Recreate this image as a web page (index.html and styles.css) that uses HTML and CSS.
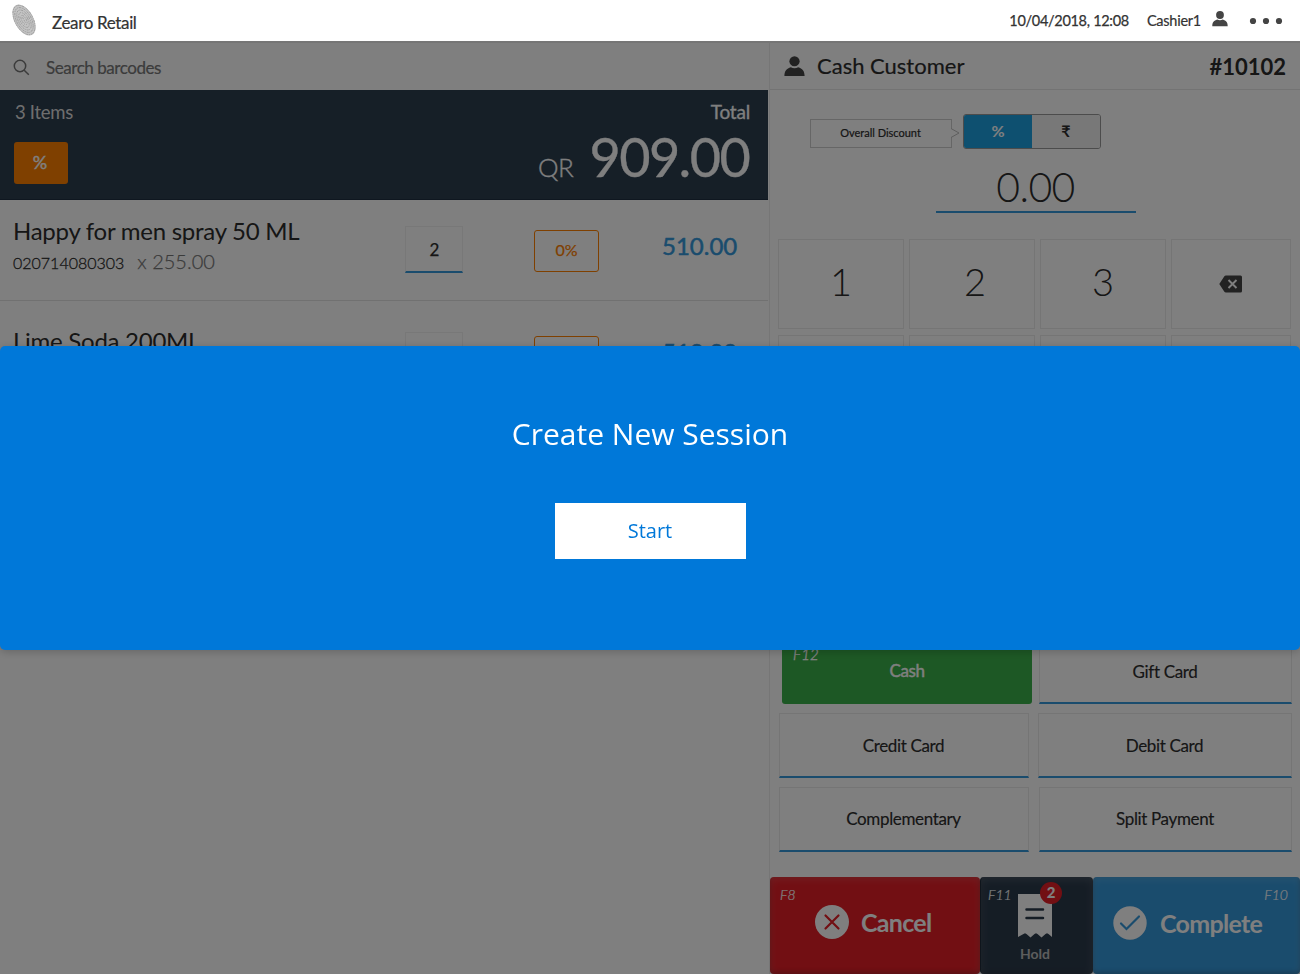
FILE: index.html
```html
<!DOCTYPE html>
<html lang="en">
<head>
<meta charset="utf-8">
<title>Zearo Retail</title>
<link rel="stylesheet" href="styles.css">
</head>
<body>
<header class="topbar">
  <svg class="logo" width="26" height="34" viewBox="0 0 26 34" fill="none">
    <g transform="rotate(-29 13 17)">
      <ellipse cx="13" cy="17" rx="9.4" ry="17" fill="#c4c4c4"/>
      <g stroke="#969696" stroke-width=".8" stroke-dasharray="2 .9 1.1 .7">
        <ellipse cx="13" cy="17" rx="9" ry="16"/>
        <ellipse cx="13" cy="17" rx="7.3" ry="13.6"/>
        <ellipse cx="13" cy="17" rx="5.6" ry="11"/>
        <ellipse cx="13" cy="17" rx="3.9" ry="8.2"/>
        <ellipse cx="13" cy="17" rx="2.2" ry="5.2"/>
        <path d="M13 14v6"/>
      </g>
    </g>
  </svg>
  <span class="brand">Zearo Retail</span>
  <span class="clock">10/04/2018, 12:08</span>
  <span class="cashier">Cashier1</span>
  <svg class="user" width="16" height="16" viewBox="0 0 16 16" fill="#444"><circle cx="8" cy="4" r="3.9"/><path d="M.3 15.2c0-4 1.700-5.700 4.900-6.700 1.700 1.100 3.900 1.100 5.600 0 3.200 1 4.900 2.700 4.900 6.700z"/></svg>
  <svg class="dots" width="34" height="8" viewBox="0 0 34 8" fill="#444"><circle cx="4" cy="4" r="3.100"/><circle cx="17" cy="4" r="3.100"/><circle cx="30" cy="4" r="3.100"/></svg>
</header>

<main class="pos">
  <section class="cart">
    <div class="search">
      <svg width="17" height="17" viewBox="0 0 17 17" fill="none" stroke="#777" stroke-width="1.500"><circle cx="7" cy="7" r="5.700"/><path d="M11.200 11.200l4.600 4.600"/></svg>
      <span>Search barcodes</span>
    </div>
    <div class="summary">
      <div class="summary-left">
        <span class="count">3 Items</span>
        <span class="percent">%</span>
      </div>
      <div class="summary-right">
        <span class="total-label">Total</span>
        <div class="total"><span class="currency">QR</span><span class="amount">909.00</span></div>
      </div>
    </div>
    <div class="item">
      <div class="info">
        <div class="name">Happy for men spray 50 ML</div>
        <div class="meta"><span class="code">020714080303</span><span class="price">x 255.00</span></div>
      </div>
      <div class="qty">2</div>
      <div class="disc">0%</div>
      <div class="line-total">510.00</div>
    </div>
    <div class="item second">
      <div class="info"><div class="name">Lime Soda 200ML</div></div>
      <div class="qty"></div>
      <div class="disc"></div>
      <div class="line-total">510.00</div>
    </div>
  </section>

  <section class="checkout">
    <div class="customer">
      <svg width="21" height="21" viewBox="0 0 16 16" fill="#444"><circle cx="8" cy="4" r="3.900"/><path d="M.3 15.200c0-4 1.700-5.700 4.900-6.700 1.700 1.100 3.900 1.100 5.600 0 3.200 1 4.900 2.700 4.900 6.700z"/></svg>
      <span class="customer-name">Cash Customer</span>
      <span class="order">#10102</span>
    </div>
    <div class="discount">
      <div class="tag">Overall Discount
        <svg class="arrow" width="9" height="11" viewBox="0 0 9 11"><path d="M0 .5L8 5 0 9.500" fill="#fff" stroke="#bbb"/></svg>
      </div>
      <div class="toggle"><span class="on">%</span><span class="off">₹</span></div>
    </div>
    <div class="entry">0.00</div>
    <div class="keys">
      <div class="key">1</div><div class="key k2">2</div><div class="key">3</div>
      <div class="key erase"><svg width="24" height="18" viewBox="0 0 24 18"><path d="M7 .5h14.500a1.500 1.500 0 0 1 1.500 1.500v14a1.500 1.500 0 0 1-1.500 1.500H7Q5.800 17.500 5.200 16.500L.3 9l4.900-7.500Q5.800.5 7 .5z" fill="#444"/><path d="M9.500 5l8 8m0-8l-8 8" stroke="#fff" stroke-width="1.900"/></svg></div>
      <div class="key"></div><div class="key"></div><div class="key"></div><div class="key"></div>
    </div>
    <div class="payments">
      <div class="pay-row first"><div class="cash"><i>F12</i>Cash</div><div class="pay">Gift Card</div></div>
      <div class="pay-row mid"><div class="pay">Credit Card</div><div class="pay">Debit Card</div></div>
      <div class="pay-row last"><div class="pay">Complementary</div><div class="pay">Split Payment</div></div>
    </div>
    <footer class="actions">
      <div class="action cancel">
        <i class="hot">F8</i>
        <svg width="34" height="34" viewBox="0 0 34 34"><circle cx="17" cy="17" r="17" fill="#fff"/><path d="M10.500 10.500l13 13m0-13l-13 13" stroke="#e41e26" stroke-width="2.200" stroke-linecap="round"/></svg>
        <span>Cancel</span>
      </div>
      <div class="action hold">
        <i class="hot">F11</i>
        <svg width="34" height="44" viewBox="0 0 34 44"><path d="M0 0h34v43l-3.500-3-1.500-.8-1.500.8-4 3.500-4-3.500-1.500-.8-1.500.8-4 3.500-4-3.500-1.500-.8-1.500.8L0 43z" fill="#fff"/><path d="M8.500 15.500h16.500M8.500 24h16.500" stroke="#2b3a4b" stroke-width="2.500" stroke-linecap="round"/></svg>
        <b class="badge">2</b>
        <span>Hold</span>
      </div>
      <div class="action complete">
        <i class="hot">F10</i>
        <svg width="34" height="34" viewBox="0 0 34 34"><circle cx="17" cy="17" r="16.700" fill="#fff"/><path d="M8 17.500l5.500 5.500L26 10.500" fill="none" stroke="#3498db" stroke-width="2.200" stroke-linecap="round"/></svg>
        <span>Complete</span>
      </div>
    </footer>
  </section>
</main>

<div class="overlay"></div>
<div class="dialog">
  <h1>Create New Session</h1>
  <button class="start">Start</button>
</div>
</body>
</html>
```
FILE: styles.css
```css
* { box-sizing: border-box; }
body {
  margin: 0;
  height: 974px;
  overflow: hidden;
  display: flex;
  flex-direction: column;
  font-family: Lato, sans-serif;
  color: #2c2c2c;
  background: #fff;
}
svg { display: block; flex: none; }
.topbar {
  height: 41px;
  flex: none;
  display: flex;
  align-items: center;
  padding: 0 17px 0 11px;
  color: #333;
}
.logo { margin-bottom: 1px; }
.brand { margin-left: 15px; font-size: 17px; letter-spacing: -.35px; padding-top: 3px; -webkit-text-stroke: .2px; }
.clock { margin-left: auto; font-size: 14.500px; letter-spacing: -.3px; -webkit-text-stroke: .25px; }
.cashier { margin-left: 18px; font-size: 14.500px; letter-spacing: -.25px; -webkit-text-stroke: .2px; }
.user { margin: 0 1px 4px 11px; }
.dots { margin-left: 20px; }

.pos { flex: 1; min-height: 0; display: flex; border-top: 2px solid #ececec; }
.cart { width: 770px; border-right: 1px solid #ececec; padding-right: 1px; }
.search {
  height: 47px;
  display: flex;
  align-items: center;
  gap: 16px;
  padding: 2px 13px 0;
  font-size: 17px;
  letter-spacing: -.45px;
  color: #777;
  -webkit-text-stroke: .2px;
}
.summary {
  height: 110px;
  display: flex;
  justify-content: space-between;
  background: #2d3e4f;
  border-bottom: 1px solid #1f2e40;
  color: #fff;
  padding: 10px 18px 0 14px;
}
.summary-left, .summary-right { display: flex; flex-direction: column; }
.count { font-size: 18.500px; letter-spacing: -.3px; line-height: 25px; padding-left: 1px; color: #ddd; }
.percent {
  width: 54px;
  height: 42px;
  margin-top: 17px;
  padding-right: 2px;
  border-radius: 3px;
  background: #ff8000;
  text-align: center;
  font-size: 18px;
  line-height: 41px;
  -webkit-text-stroke: .4px;
}
.summary-right { align-items: flex-end; }
.total-label { font-size: 19px; letter-spacing: -.2px; line-height: 22px; padding-top: 1px; -webkit-text-stroke: .3px; }
.total { display: flex; align-items: baseline; line-height: 64px; margin-top: 2px; }
.currency { font-size: 26px; font-weight: 300; letter-spacing: -.4px; margin-right: 16px; -webkit-text-stroke: .3px; }
.amount { font-size: 54px; letter-spacing: -1.600px; margin-right: .8px; -webkit-text-stroke: .3px; }
.item {
  height: 101px;
  display: flex;
  align-items: flex-start;
  border-bottom: 1px solid #e3e3e3;
  padding-left: 13px;
}
.info { width: 392px; padding-top: 16px; }
.name { font-size: 24px; letter-spacing: -.26px; line-height: 30px; white-space: nowrap; }
.meta { display: flex; align-items: baseline; line-height: 30px; }
.code { font-size: 16px; font-weight: 300; -webkit-text-stroke: .3px; }
.price { font-size: 20px; font-weight: 300; margin-left: 13px; color: #777; -webkit-text-stroke: .25px; }
.qty {
  width: 58px;
  height: 47px;
  margin-top: 26px;
  border: 1px solid #f0f0f0;
  border-bottom: 2px solid #3498db;
  padding-left: 1px;
  text-align: center;
  font-size: 17px;
  line-height: 45px;
  -webkit-text-stroke: .25px;
}
.disc {
  width: 65px;
  height: 42px;
  margin: 30px 0 0 71px;
  border: 1px solid #ff8000;
  border-radius: 3px;
  text-align: center;
  font-size: 16px;
  line-height: 38px;
  color: #ff8000;
  -webkit-text-stroke: .25px;
}
.line-total { margin: 31px 0 0 63px; font-size: 24px; line-height: 29px; color: #3498db; -webkit-text-stroke: .5px; }
.second { border: 0; }
.second .info { padding-top: 25px; }
.second .qty { margin-top: 31px; }
.second .disc { margin-top: 35px; }
.second .line-total { margin-top: 36px; }

.checkout { flex: 1; min-width: 0; display: flex; flex-direction: column; }
.customer {
  height: 47px;
  flex: none;
  display: flex;
  align-items: center;
  border-bottom: 1px solid #e6e6e6;
  padding: 0 14px;
  font-size: 22px;
}
.customer-name { margin: 0 0 2px 12px; -webkit-text-stroke: .2px; }
.order { margin-left: auto; font-weight: 700; }
.discount { display: flex; padding: 24px 0 0 40px; gap: 11px; }
.tag {
  position: relative;
  width: 142px;
  height: 29px;
  margin-top: 5px;
  padding-right: 1px;
  border: 1px solid #ccc;
  text-align: center;
  font-size: 11px;
  line-height: 26px;
  -webkit-text-stroke: .2px;
}
.arrow { position: absolute; right: -9px; top: 8px; }
.toggle {
  display: flex;
  width: 138px;
  height: 35px;
  border: 1px solid #999;
  border-radius: 3px;
  overflow: hidden;
  text-align: center;
  font-size: 16px;
  font-weight: 700;
  line-height: 32px;
}
.toggle span { flex: 1; }
.on { background: #1da1e0; color: #fff; }
.off { background: #f0f0f0; font-family: Lato, "Noto Sans", sans-serif; }
.entry {
  width: 200px;
  height: 64px;
  margin-left: 166px;
  border-bottom: 2px solid #3498db;
  padding-right: 1px;
  text-align: center;
  font-size: 41px;
  font-weight: 300;
  letter-spacing: -.6px;
  line-height: 75px;
}
.keys {
  display: grid;
  grid-template-columns: 126px 126px 126px 120px;
  grid-auto-rows: 90px;
  gap: 6px 5px;
  padding: 26px 0 0 8px;
}
.key {
  border: 1px solid #ebebeb;
  display: flex;
  align-items: center;
  justify-content: center;
  padding-bottom: 6px;
  font-size: 38px;
  font-weight: 300;
}
.k2 { padding-left: 6px; }
.erase { padding-bottom: 0; }
.payments { margin-top: auto; padding: 0 8px 25px 9px; font-size: 17px; letter-spacing: -.36px; -webkit-text-stroke: .15px; }
.pay-row { display: grid; grid-template-columns: 250px 1fr; gap: 10px; margin-bottom: 9px; }
.pay-row.first { padding-left: 3px; gap: 7px; }
.pay-row.mid { gap: 9px; }
.pay-row.last { margin-bottom: 0; }
.pay {
  height: 65px;
  border: 1px solid #ebebeb;
  border-bottom: 2px solid #3498db;
  padding-right: 1px;
  text-align: center;
  line-height: 64px;
}
.last .pay { line-height: 62px; }
.cash {
  position: relative;
  height: 65px;
  border-radius: 3px;
  background: #3bb14a;
  color: #fff;
  text-align: center;
  line-height: 63px;
  -webkit-text-stroke: .4px;
}
.cash i { position: absolute; left: 11px; top: 5px; font-size: 15px; letter-spacing: .2px; line-height: 20px; font-weight: 300; }
.actions { display: grid; grid-template-columns: 210px 113px 1fr; height: 97px; flex: none; color: #fff; }
.action {
  position: relative;
  display: flex;
  align-items: center;
  border-radius: 4px;
  font-size: 25px;
  font-weight: 700;
  letter-spacing: -.7px;
  box-shadow: inset 0 2px 9px rgba(255, 255, 255, .16), inset 0 -2px 5px rgba(0, 0, 0, .25);
}
.cancel { background: #e41e26; padding: 0 0 7px 45px; gap: 12px; }
.complete { background: #3498db; padding: 0 0 5px 20px; gap: 13px; }
.hold {
  background: #2b3a4b;
  flex-direction: column;
  padding: 17px 4px 0 0;
  font-size: 14px;
  letter-spacing: 0;
  border-left: 1px solid #1f2b38;
}
.hold > span { margin-top: 7px; line-height: 17px; color: #bbb; }
.complete > span { margin-top: -1px; }
.hot { position: absolute; left: 10px; top: 9px; font-size: 14px; letter-spacing: 0; line-height: 18px; font-weight: 300; -webkit-text-stroke: .2px; }
.hold .hot { left: 7px; }
.complete .hot { left: auto; right: 12px; }
.badge {
  position: absolute;
  left: 59px;
  top: 5px;
  width: 22px;
  height: 22px;
  border-radius: 50%;
  background: #e41e26;
  font-size: 15px;
  line-height: 21px;
  text-align: center;
}

.overlay { position: fixed; inset: 41px 0 0; background: rgba(0, 0, 0, .5); }
.dialog {
  position: fixed;
  left: 0;
  right: 0;
  top: 346px;
  height: 304px;
  display: flex;
  flex-direction: column;
  align-items: center;
  padding-top: 68px;
  border-radius: 5px;
  background: #0078d9;
  box-shadow: 0 2px 9px rgba(0, 0, 0, .2);
}
.dialog h1 { margin: 0; font: 400 30px/40px "Open Sans", sans-serif; color: #fff; }
.start {
  width: 191px;
  height: 56px;
  margin-top: 49px;
  padding: 0;
  border: 0;
  background: #fff;
  font: 400 20px/56px "Open Sans", sans-serif;
  color: #0078d9;
}
```
